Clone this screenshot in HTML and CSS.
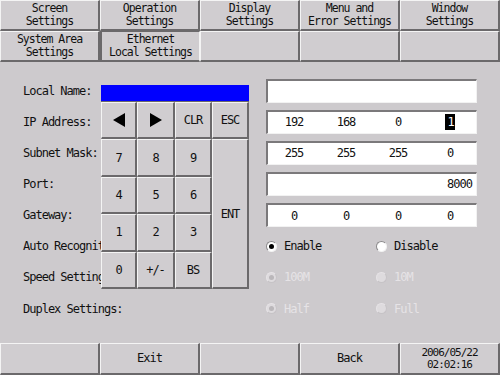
FILE: index.html
```html
<!DOCTYPE html>
<html lang="en">
<head>
    <meta charset="UTF-8">
    <meta name="viewport" content="width=device-width, initial-scale=1.0">
    <title>Ethernet Local Settings</title>
    <link rel="stylesheet" href="styles.css">
</head>
<body>
    <div class="screen">
        <div class="tabs">
            <div class="tab">Screen<br>Settings</div>
            <div class="tab">Operation<br>Settings</div>
            <div class="tab">Display<br>Settings</div>
            <div class="tab">Menu and<br>Error Settings</div>
            <div class="tab">Window<br>Settings</div>
            <div class="tab">System Area<br>Settings</div>
            <div class="tab active">Ethernet<br>Local Settings</div>
            <div class="tab"></div>
            <div class="tab"></div>
            <div class="tab"></div>
        </div>

        <div class="main">
            <div class="row">
                <span class="label">Local Name:</span>
                <div class="field"></div>
            </div>
            <div class="row">
                <span class="label">IP Address:</span>
                <div class="field quad">
                    <span>192</span><span>168</span><span>0</span><span><b class="cursor">1</b></span>
                </div>
            </div>
            <div class="row">
                <span class="label">Subnet Mask:</span>
                <div class="field quad">
                    <span>255</span><span>255</span><span>255</span><span>0</span>
                </div>
            </div>
            <div class="row">
                <span class="label">Port:</span>
                <div class="field port">8000</div>
            </div>
            <div class="row">
                <span class="label">Gateway:</span>
                <div class="field quad">
                    <span>0</span><span>0</span><span>0</span><span>0</span>
                </div>
            </div>
            <div class="row">
                <span class="label">Auto Recognition:</span>
                <div class="option"><i class="radio on"></i>Enable</div>
                <div class="option"><i class="radio"></i>Disable</div>
            </div>
            <div class="row">
                <span class="label">Speed Settings:</span>
                <div class="option off"><i class="radio on"></i>100M</div>
                <div class="option off"><i class="radio"></i>10M</div>
            </div>
            <div class="row">
                <span class="label">Duplex Settings:</span>
                <div class="option off"><i class="radio on"></i>Half</div>
                <div class="option off"><i class="radio"></i>Full</div>
            </div>

            <!-- keypad popup -->
            <div class="keypad">
                <div class="display"></div>
                <div class="keys">
                    <div class="key"><svg width="14" height="14" viewBox="0 0 14 14"><polygon points="13,0 13,14 1,7" fill="#000"/></svg></div>
                    <div class="key"><svg width="14" height="14" viewBox="0 0 14 14"><polygon points="1,0 1,14 13,7" fill="#000"/></svg></div>
                    <div class="key">CLR</div>
                    <div class="key">ESC</div>
                    <div class="key">7</div>
                    <div class="key">8</div>
                    <div class="key">9</div>
                    <div class="key ent">ENT</div>
                    <div class="key">4</div>
                    <div class="key">5</div>
                    <div class="key">6</div>
                    <div class="key">1</div>
                    <div class="key">2</div>
                    <div class="key">3</div>
                    <div class="key">0</div>
                    <div class="key">+/-</div>
                    <div class="key">BS</div>
                </div>
            </div>
        </div>

        <div class="footer">
            <div class="btn"></div>
            <div class="btn">Exit</div>
            <div class="btn"></div>
            <div class="btn">Back</div>
            <div class="btn date">2006/05/22<br>02:02:16</div>
        </div>
    </div>
</body>
</html>
```

FILE: styles.css
```css
*{padding: 0; margin: 0;}

body{
    background-color: #cdcacd;
    font-family: "DejaVu Sans Mono", "Liberation Mono", monospace;
    font-size: 12px;
    letter-spacing: -1px;
    color: #111;
}
.screen{
    width: 500px;
    height: 375px;
    display: flex;
    flex-direction: column;
    overflow: hidden;
}

/* tabs + bottom buttons */
.tabs{
    display: grid;
    grid-template-columns: repeat(5, 100px);
    grid-template-rows: 31px 31px;
}
.tab, .btn{
    box-sizing: border-box;
    border-style: solid;
    border-width: 1px 2px 2px 1px;
    border-color: #f4f4f4 #6b696b #6b696b #f4f4f4;
    background-color: #d0cdd0;
    display: flex;
    align-items: center;
    justify-content: center;
    text-align: center;
    line-height: 13px;
}
.tab{
    font-size: 11.5px;
}
.tab.active{
    border-color: #6b696b #f4f4f4 #6b696b #6b696b;
    border-width: 1px 1px 2px 2px;
}

.footer{
    display: grid;
    grid-template-columns: repeat(5, 100px);
    height: 32px;
}
.btn.date{
    font-size: 11px;
    line-height: 12px;
}

/* form */
.main{
    position: relative;
    height: 281px;
    box-sizing: border-box;
    padding: 13px 0 0 23px;
}
.row{
    display: flex;
    align-items: center;
    height: 31.15px;
}
.label{
    width: 243px;
    white-space: nowrap;
}
.field{
    width: 211px;
    height: 24px;
    box-sizing: border-box;
    background-color: #fff;
    border-style: solid;
    border-width: 2px 1px 1px 2px;
    border-color: #7b797b #f2f2f2 #f2f2f2 #7b797b;
    display: flex;
    align-items: center;
}
.field.quad span{
    flex: 1;
    text-align: center;
}
.field.port{
    justify-content: flex-end;
    padding-right: 4px;
}
.cursor{
    font-weight: normal;
    background-color: #000;
    color: #fff;
    padding: 1px 1px 1px 2px;
}

.option{
    width: 110px;
    display: flex;
    align-items: center;
    gap: 7px;
}
.radio{
    width: 11px;
    height: 11px;
    box-sizing: border-box;
    border-radius: 50%;
    background-color: #fff;
    border: 1px solid;
    border-color: #8a888a #f2f2f2 #f2f2f2 #8a888a;
    display: flex;
    align-items: center;
    justify-content: center;
}
.radio.on::after{
    content: "";
    width: 5px;
    height: 5px;
    border-radius: 50%;
    background-color: #000;
}
.option.off{
    color: #e6e3e6;
}
.option.off .radio{
    background-color: #dedbde;
    border-color: #e6e3e6 #c6c3c6 #c6c3c6 #e6e3e6;
}
.option.off .radio.on::after{
    background-color: #bab7ba;
}

/* keypad popup */
.keypad{
    position: absolute;
    left: 101px;
    top: 23px;
    width: 148px;
}
.display{
    height: 16px;
    background-color: #0000ff;
    border-bottom: 1px solid #6b696b;
}
.keys{
    display: grid;
    grid-template-columns: 36px 38px 37px 37px;
    grid-template-rows: repeat(5, 37.4px);
}
.key{
    box-sizing: border-box;
    border-style: solid;
    border-width: 1px 2px 2px 1px;
    border-color: #f4f4f4 #6b696b #6b696b #f4f4f4;
    background-color: #d0cdd0;
    display: flex;
    align-items: center;
    justify-content: center;
}
.key.ent{
    grid-column: 4;
    grid-row: 2 / span 4;
}
```
